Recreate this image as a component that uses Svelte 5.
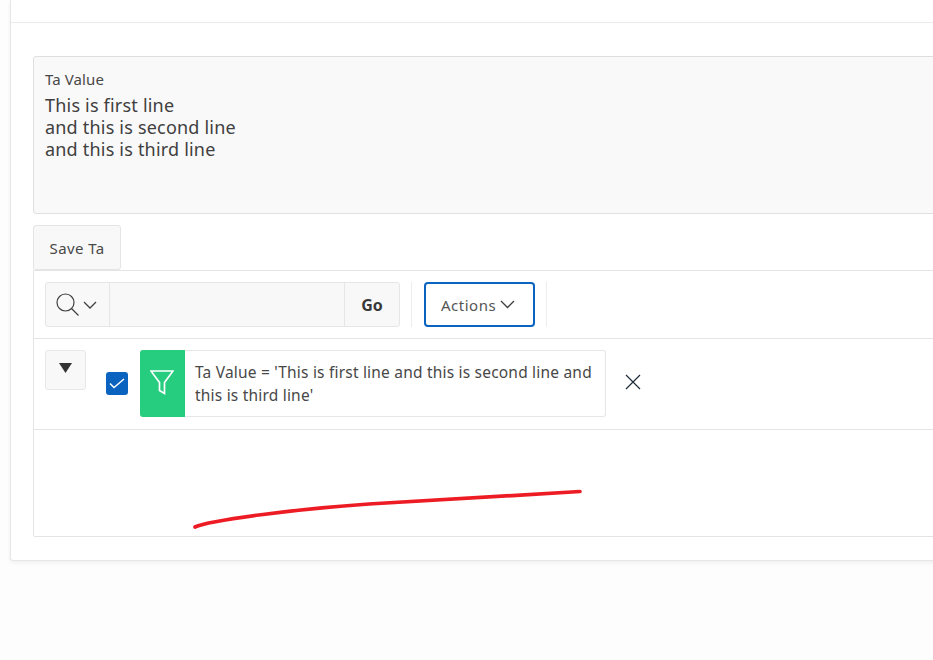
<script>
  const lines = ['This is first line', 'and this is second line', 'and this is third line'];
</script>

<div class="page">
  <section class="card">
    <div class="head"></div>
    <div class="body">
      <div class="field">
        <div class="label">Ta Value</div>
        <div class="value">
          {#each lines as l}<div>{l}</div>{/each}
        </div>
      </div>
      <button class="save">Save Ta</button>
      <div class="grid">
        <div class="toolbar">
          <div class="search">
            <div class="search-btn">
              <svg width="25" height="25" viewBox="0 0 25 25" fill="none" stroke="#404040" stroke-width="1.2">
                <circle cx="10.5" cy="10.5" r="8.5" />
                <path d="M16.5 16.5l7 7" />
              </svg>
              <svg width="14" height="8" viewBox="0 0 14 8" fill="none" stroke="#404040" stroke-width="1.3">
                <path d="M1 1l6 6 6-6" />
              </svg>
            </div>
            <div class="search-input"></div>
            <div class="go">Go</div>
          </div>
          <div class="sep"></div>
          <button class="actions">
            <span>Actions</span>
            <svg width="15" height="9" viewBox="0 0 15 9" fill="none" stroke="#404040" stroke-width="1.3">
              <path d="M1 1l6.5 6.5L14 1" />
            </svg>
          </button>
          <div class="sep"></div>
        </div>
        <div class="filters">
          <div class="toggle">
            <svg width="13" height="10" viewBox="0 0 13 10"><path d="M0 0h13L6.5 10z" fill="#333" /></svg>
          </div>
          <div class="check">
            <svg width="16" height="11" viewBox="0 0 16 11" fill="none" stroke="#fff" stroke-width="1.4">
              <path d="M1 5.500l4 4L15 1" />
            </svg>
          </div>
          <div class="filter">
            <div class="funnel">
              <svg width="24" height="25" viewBox="0 0 24 25" fill="none" stroke="#fff" stroke-width="1.7">
                <path d="M1 1h22L14.500 12.500V23.500L9.500 20.500V12.500z" />
              </svg>
            </div>
            <div class="filter-text">Ta Value = 'This is first line and this is second line and this is third line'</div>
          </div>
          <svg class="remove" width="16" height="16" viewBox="0 0 16 16" fill="none" stroke="#1c2b3a" stroke-width="1.2">
            <path d="M1 1l14 14M15 1L1 15" />
          </svg>
        </div>
        <div class="empty">
          <svg class="scribble" width="400" height="50" viewBox="0 0 400 50" fill="none">
            <path d="M6 40C16 35.500 40 32 70 28C100 24 135 20 180 17C240 13 320 9 391 4.500" stroke="#ed1c24" stroke-width="3.700" stroke-linecap="round" />
          </svg>
        </div>
      </div>
    </div>
  </section>
</div>

<style>
  :global(body) {
    margin: 0;
    background: #fdfdfd;
    overflow: hidden;
    font-family: "Noto Sans", "Open Sans", "Liberation Sans", sans-serif;
    color: #333;
  }
  .page {
    height: 660px;
    padding-left: 10px;
    overflow: hidden;
    box-sizing: border-box;
  }
  .card {
    width: 1100px;
    height: 561px;
    box-sizing: border-box;
    background: #fff;
    border: 1px solid #e6e6e6;
    border-top: 0;
    border-radius: 0 0 3px 3px;
    box-shadow: 0 2px 4px rgba(0, 0, 0, 0.05);
  }
  .head {
    height: 22px;
    border-bottom: 1px solid #ebebeb;
  }
  .body {
    padding: 33px 0 0 22px;
  }
  .field {
    height: 158px;
    box-sizing: border-box;
    padding: 13px 11px 0;
    background: #f9f9f9;
    border: 1px solid #dfdfdf;
    border-radius: 3px;
  }
  .label {
    font-size: 15px;
    line-height: 18px;
    letter-spacing: 0.1px;
    color: #484848;
  }
  .value {
    margin-top: 6px;
    font-size: 18px;
    line-height: 22px;
    letter-spacing: 0.2px;
    color: #404040;
  }
  .save {
    display: block;
    margin-top: 11px;
    width: 88px;
    height: 45px;
    padding: 0;
    background: #f8f8f8;
    border: 1px solid #e4e4e4;
    border-radius: 3px;
    font: inherit;
    font-size: 15px;
    letter-spacing: 0.4px;
    color: #484848;
  }
  .grid {
    height: 267px;
    box-sizing: border-box;
    border: 1px solid #e4e4e4;
    border-radius: 0 0 0 2px;
  }
  .toolbar {
    height: 68px;
    box-sizing: border-box;
    padding: 11px 0 0 11px;
    display: flex;
    border-bottom: 1px solid #e4e4e4;
  }
  .search {
    display: flex;
    width: 355px;
    height: 45px;
    box-sizing: border-box;
    background: #f8f8f8;
    border: 1px solid #e6e6e6;
    border-radius: 3px;
  }
  .search-btn {
    width: 64px;
    display: flex;
    align-items: center;
    gap: 3px;
    padding-left: 9px;
    box-sizing: border-box;
    border-right: 1px solid #e6e6e6;
  }
  .search-input {
    flex: 1;
  }
  .go {
    width: 54px;
    border-left: 1px solid #e6e6e6;
    display: flex;
    align-items: center;
    justify-content: center;
    font-size: 16px;
    font-weight: 700;
    color: #383838;
  }
  .sep {
    width: 1px;
    height: 45px;
    background: #ededed;
    margin-left: 11px;
  }
  .actions {
    margin-left: 12px;
    width: 111px;
    height: 45px;
    box-sizing: border-box;
    padding: 0 0 0 15px;
    display: flex;
    align-items: center;
    gap: 4px;
    background: #fff;
    border: 2px solid #0a64bf;
    border-radius: 4px;
    font: inherit;
    font-size: 15px;
    letter-spacing: 0.5px;
    color: #555;
  }
  .filters {
    height: 91px;
    box-sizing: border-box;
    position: relative;
    border-bottom: 1px solid #e4e4e4;
    display: flex;
    align-items: flex-start;
    padding: 11px 0 0 11px;
  }
  .toggle {
    width: 41px;
    height: 40px;
    box-sizing: border-box;
    background: #f8f8f8;
    border: 1px solid #e8e8e8;
    border-radius: 3px;
    display: flex;
    align-items: center;
    justify-content: center;
    padding-bottom: 4px;
  }
  .check {
    width: 22px;
    height: 23px;
    margin: 22px 0 0 20px;
    background: #0a64bf;
    border-radius: 3px;
    display: flex;
    align-items: center;
    justify-content: center;
  }
  .filter {
    margin-left: 12px;
    width: 466px;
    height: 67px;
    box-sizing: border-box;
    display: flex;
    border: 1px solid #e6e6e6;
    border-left: 0;
    border-radius: 3px;
  }
  .funnel {
    width: 45px;
    height: 67px;
    margin-top: -1px;
    padding: 0 1px 2px 0;
    box-sizing: border-box;
    background: #27cd7f;
    border-radius: 3px 0 0 3px;
    flex: none;
    display: flex;
    align-items: center;
    justify-content: center;
  }
  .filter-text {
    padding: 10px 10px 0;
    font-size: 15.5px;
    line-height: 23px;
    letter-spacing: 0.2px;
    color: #484848;
  }
  .remove {
    margin: 24px 0 0 19px;
  }
  .empty {
    position: relative;
    height: 106px;
  }
  .scribble {
    position: absolute;
    left: 155px;
    top: 57px;
  }
</style>
